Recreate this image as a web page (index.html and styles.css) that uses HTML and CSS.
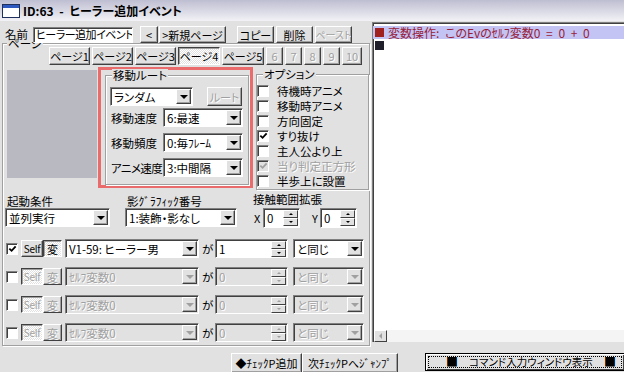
FILE: index.html
```html
<!DOCTYPE html>
<html lang="ja">
<head>
<meta charset="UTF-8">
<title>ID:63 - ヒーラー追加イベント</title>
<link rel="stylesheet" href="styles.css">
</head>
<body>
<div class="titlebar">
  <svg class="appicon" width="18" height="14" viewBox="0 0 18 14"><rect x="0.5" y="0.5" width="17" height="13" fill="#fff" stroke="#20305c"/><rect x="1" y="1" width="16" height="3" fill="#2c58c0"/></svg>
  <span class="title-text">ID:63 - ヒーラー追加イベント</span>
</div>
<div class="main">
  <div class="editor">
    <div class="namebar">
      <span class="name-label">名前</span>
      <div class="field name-field">ヒーラー追加イベント</div>
      <span class="btn nb-prev">&lt;</span>
      <span class="btn nb-new">&gt;新規ページ</span>
      <span class="btn nb-copy">コピー</span>
      <span class="btn nb-del">削除</span>
      <span class="btn nb-paste off">ペースト</span>
    </div>
    <div class="group pagebox">
      <span class="group-title">ページ</span>
      <div class="tabs">
        <span class="btn tab">ページ1</span>
        <span class="btn tab">ページ2</span>
        <span class="btn tab">ページ3</span>
        <span class="btn tab wide on">ページ4</span>
        <span class="btn tab wide">ページ5</span>
        <span class="btn tab num off">6</span>
        <span class="btn tab num off">7</span>
        <span class="btn tab num off">8</span>
        <span class="btn tab num off">9</span>
        <span class="btn tab num ten off">10</span>
      </div>
      <div class="upper">
        <div class="graphic"></div>
        <div class="route-frame">
          <div class="group route">
            <span class="group-title">移動ルート</span>
            <div class="route-top">
              <div class="combo route-type"><span class="combo-text">ランダム</span><span class="drop"></span></div>
              <span class="btn off route-btn">ルート</span>
            </div>
            <div class="route-row first"><span class="route-label">移動速度</span><div class="combo route-val"><span class="combo-text">6:最速</span><span class="drop"></span></div></div>
            <div class="route-row"><span class="route-label">移動頻度</span><div class="combo route-val"><span class="combo-text">0:毎ﾌﾚｰﾑ</span><span class="drop"></span></div></div>
            <div class="route-row"><span class="route-label tight">アニメ速度</span><div class="combo route-val"><span class="combo-text">3:中間隔</span><span class="drop"></span></div></div>
          </div>
        </div>
        <div class="group options">
          <span class="group-title">オプション</span>
          <div class="opt"><span class="check"></span>待機時アニメ</div>
          <div class="opt"><span class="check"></span>移動時アニメ</div>
          <div class="opt"><span class="check"></span>方向固定</div>
          <div class="opt"><span class="check"><svg width="10" height="10" viewBox="0 0 10 10"><path d="M1.5 4.5 L4 7 L8.5 2" fill="none" stroke="#000" stroke-width="2"/></svg></span>すり抜け</div>
          <div class="opt"><span class="check"></span>主人公より上</div>
          <div class="opt off"><span class="check dim"><svg width="10" height="10" viewBox="0 0 10 10"><path d="M1.5 4.5 L4 7 L8.5 2" fill="none" stroke="#a0a0a0" stroke-width="2"/></svg></span>当り判定正方形</div>
          <div class="opt"><span class="check"></span>半歩上に設置</div>
        </div>
      </div>
      <div class="triggers">
        <div class="trig trig-start">
          <span class="trig-label">起動条件</span>
          <div class="combo"><span class="combo-text">並列実行</span><span class="drop"></span></div>
        </div>
        <div class="trig trig-shadow">
          <span class="trig-label">影ｸﾞﾗﾌｨｯｸ番号</span>
          <div class="combo"><span class="combo-text">1:装飾・影なし</span><span class="drop"></span></div>
        </div>
        <div class="trig trig-range">
          <span class="trig-label">接触範囲拡張</span>
          <div class="xy">
            <span class="axis">X</span>
            <div class="spin xy-spin"><span class="spin-text">0</span><span class="updown"><i class="up"></i><i class="down"></i></span></div>
            <span class="axis axis-y">Y</span>
            <div class="spin xy-spin"><span class="spin-text">0</span><span class="updown"><i class="up"></i><i class="down"></i></span></div>
          </div>
        </div>
      </div>
      <div class="conds">
        <div class="cond">
          <span class="check"><svg width="10" height="10" viewBox="0 0 10 10"><path d="M1.5 4.5 L4 7 L8.5 2" fill="none" stroke="#000" stroke-width="2"/></svg></span>
          <span class="btn self">Self</span><span class="btn var on">変</span>
          <div class="combo cond-var"><span class="combo-text">V1-59: ヒーラー男</span><span class="drop"></span></div>
          <span class="ga">が</span>
          <div class="spin cond-num"><span class="spin-text">1</span><span class="updown"><i class="up"></i><i class="down"></i></span></div>
          <div class="combo cond-op"><span class="combo-text">と同じ</span><span class="drop"></span></div>
        </div>
        <div class="cond">
          <span class="check"></span>
          <span class="btn self on off">Self</span><span class="btn var off">変</span>
          <div class="combo cond-var dis"><span class="combo-text">ｾﾙﾌ変数0</span><span class="drop"></span></div>
          <span class="ga">が</span>
          <div class="spin cond-num dis"><span class="spin-text">0</span><span class="updown"><i class="up"></i><i class="down"></i></span></div>
          <div class="combo cond-op dis"><span class="combo-text">と同じ</span><span class="drop"></span></div>
        </div>
        <div class="cond">
          <span class="check"></span>
          <span class="btn self on off">Self</span><span class="btn var off">変</span>
          <div class="combo cond-var dis"><span class="combo-text">ｾﾙﾌ変数0</span><span class="drop"></span></div>
          <span class="ga">が</span>
          <div class="spin cond-num dis"><span class="spin-text">0</span><span class="updown"><i class="up"></i><i class="down"></i></span></div>
          <div class="combo cond-op dis"><span class="combo-text">と同じ</span><span class="drop"></span></div>
        </div>
        <div class="cond">
          <span class="check"></span>
          <span class="btn self on off">Self</span><span class="btn var off">変</span>
          <div class="combo cond-var dis"><span class="combo-text">ｾﾙﾌ変数0</span><span class="drop"></span></div>
          <span class="ga">が</span>
          <div class="spin cond-num dis"><span class="spin-text">0</span><span class="updown"><i class="up"></i><i class="down"></i></span></div>
          <div class="combo cond-op dis"><span class="combo-text">と同じ</span><span class="drop"></span></div>
        </div>
      </div>
    </div>
  </div>
  <div class="eventlist">
    <div class="ev-rows">
      <div class="ev sel"><span class="ev-mark"></span>変数操作: このEvのｾﾙﾌ変数0 = 0 + 0</div>
      <div class="ev"><span class="ev-mark end"></span></div>
    </div>
    <div class="hscroll"><span class="sb-btn"></span><span class="sb-track"></span></div>
  </div>
</div>
<div class="footer">
  <span class="btn foot-add">◆ﾁｪｯｸP追加</span>
  <span class="btn foot-jump">次ﾁｪｯｸPへｼﾞｬﾝﾌﾟ</span>
  <div class="cmd"><div class="cmd-inner"><span class="sq">■</span><span>コマンド入力ウィンドウ表示</span><span class="sq">■</span></div></div>
</div>
</body>
</html>
```

FILE: styles.css
```css
*{margin:0;padding:0;box-sizing:border-box;}
body{width:624px;height:372px;overflow:hidden;background:#e1e1e1;color:#000;font:11.5px/14px "Noto Sans CJK JP","Noto Sans",sans-serif;font-feature-settings:"palt";}

/* title bar */
.titlebar{height:21px;display:flex;align-items:center;padding:1px 0 0 2px;background:linear-gradient(#bebed2,#f2f2f6);}
.appicon{margin-right:3px;}
.title-text{font-weight:bold;font-size:12px;word-spacing:3px;}

.main{display:flex;height:326px;}
.editor{width:372px;flex:none;}

/* common widgets */
.btn{display:flex;align-items:center;justify-content:center;height:17px;background:#e1e1e1;border:1px solid;border-color:#fff #404040 #404040 #fff;box-shadow:inset -1px -1px #a0a0a0;white-space:nowrap;font-size:11px;flex:none;overflow:hidden;}
.btn.on{border-color:#404040 #fff #fff #404040;box-shadow:inset 1px 1px #a0a0a0;background:repeating-conic-gradient(#fff 0 25%,#e1e1e1 0 50%) 0 0/2px 2px;}
.off{color:#a0a0a0;text-shadow:1px 1px #fff;}
.field{background:#fff;border:1px solid;border-color:#808080 #fff #fff #808080;box-shadow:inset 1px 1px #404040;}

.group{border:1px solid #a0a0a0;box-shadow:inset 1px 1px #fff,1px 1px #fff;flex:none;}
.group-title{display:block;width:max-content;margin:-7px 0 0 4px;padding:0 1px;line-height:13px;background:#e1e1e1;}

.combo{display:flex;align-items:center;height:19px;padding:1px 1px 1px 2px;background:#fff;border:1px solid;border-color:#808080 #fff #fff #808080;box-shadow:inset 1px 1px #404040;flex:none;}
.combo-text{flex:1;padding-left:1px;white-space:nowrap;overflow:hidden;}
.drop{width:15px;height:15px;display:flex;align-items:center;justify-content:center;background:#e1e1e1;border:1px solid;border-color:#fff #404040 #404040 #fff;box-shadow:inset -1px -1px #a0a0a0;}
.drop::after{content:"";border-left:4px solid transparent;border-right:4px solid transparent;border-top:4px solid #000;}
.combo.dis{background:#e1e1e1;}
.combo.dis .combo-text{color:#a0a0a0;text-shadow:1px 1px #fff;}
.combo.dis .drop::after{border-top-color:#a0a0a0;}

.spin{display:flex;align-items:center;height:20px;padding:1px 1px 1px 2px;background:#fff;border:1px solid;border-color:#808080 #fff #fff #808080;box-shadow:inset 1px 1px #404040;flex:none;}
.spin-text{flex:1;padding-left:1px;}
.updown{display:flex;flex-direction:column;width:15px;height:16px;}
.updown i{flex:1;display:flex;align-items:center;justify-content:center;background:#e1e1e1;border:1px solid;border-color:#fff #404040 #404040 #fff;}
.updown .up::after{content:"";border-left:2px solid transparent;border-right:2px solid transparent;border-bottom:2px solid #000;}
.updown .down::after{content:"";border-left:2px solid transparent;border-right:2px solid transparent;border-top:2px solid #000;}
.spin.dis{background:#e1e1e1;}
.spin.dis .spin-text{color:#a0a0a0;text-shadow:1px 1px #fff;}
.spin.dis .updown i::after{border-top-color:#a0a0a0;border-bottom-color:#a0a0a0;}

.check{display:flex;align-items:center;justify-content:center;width:12px;height:12px;background:#fff;border:1px solid;border-color:#808080 #fff #fff #808080;box-shadow:inset 1px 1px #404040;flex:none;}
.check.dim{background:#e1e1e1;}
.check svg{margin:1px 0 0 1px;}

/* name row */
.namebar{position:relative;z-index:1;display:flex;align-items:flex-start;height:22px;}
.name-label{margin:6px 0 0 5px;width:28px;}
.name-field{width:100px;height:16px;margin-top:6px;padding-left:2px;line-height:13px;font-size:11px;letter-spacing:-0.5px;white-space:nowrap;overflow:hidden;}
.namebar .btn{margin-top:5px;}
.nb-prev{width:18px;margin-left:7px;}
.nb-new{width:67px;margin-left:1px;}
.nb-copy{width:37px;margin-left:11px;}
.nb-del{width:37px;margin-left:2px;}
.nb-paste{width:37px;margin-left:2px;font-size:10px;}

/* page frame */
.pagebox{width:368px;height:303px;margin-left:2px;}
.tabs{display:flex;gap:2px;margin:-3px 0 0 46px;}
.tab{width:41px;height:18px;}
.tab.wide{width:42px;}
.tab.num{width:17px;}
.tab.ten{width:20px;}

.upper{display:flex;align-items:flex-start;height:122px;margin-top:2px;}
.graphic{width:90px;height:108px;margin:3px 0 0 4px;background:#b9b9c1;}
.route-frame{width:155px;height:121px;margin-left:1px;border:3px solid #e96b6b;}
.route{width:144px;height:110px;margin:5px 0 0 4px;}
.route .group-title{margin-left:6px;}
.route-top{display:flex;align-items:center;margin:5px 0 0 4px;}
.route-type{width:83px;}
.route-btn{width:35px;height:19px;margin-left:14px;}
.route-row{display:flex;align-items:center;margin:6px 0 0 4px;}
.route-row.first{margin-top:2px;}
.route-label{width:53px;padding-left:1px;white-space:nowrap;}
.route-label.tight{letter-spacing:-0.6px;}
.route-val{width:80px;}

.options{width:113px;height:116px;margin:7px 0 0 3px;}
.options .group-title{margin-left:6px;}
.opt{display:flex;align-items:center;height:15px;white-space:nowrap;}
.opt .check{margin:0 8px 0 0;}
.options .group-title + .opt{margin-top:2px;}

/* start condition row */
.triggers{display:flex;height:35px;margin-top:4px;}
.trig{display:flex;flex-direction:column;}
.trig-label{height:15px;line-height:16px;padding-left:2px;white-space:nowrap;}
.trig-start{width:105px;margin-left:2px;}
.trig-shadow{width:112px;margin-left:15px;}
.trig-range{margin-left:16px;}
.trig-range .trig-label{line-height:12px;padding-left:0;}
.xy{display:flex;align-items:center;}
.axis{width:10px;padding-left:1px;font-size:11px;}
.axis-y{margin-left:11px;width:9px;}
.xy-spin{width:37px;}

/* page conditions */
.conds{display:flex;flex-direction:column;gap:9px;margin-top:11px;}
.cond{display:flex;align-items:center;height:19px;}
.cond .check{margin-left:3px;}
.self{width:22px;margin-left:3px;font-size:10px;letter-spacing:-0.3px;}
.var{width:19px;}
.cond-var{width:134px;margin-left:3px;}
.ga{width:11px;margin-left:3px;}
.cond-num{width:73px;margin-left:2px;height:19px;}
.cond-op{width:71px;margin-left:5px;}

/* event list */
.eventlist{flex:1;display:flex;flex-direction:column;margin:1px 0 5px;background:#fff;border-left:1px solid #808080;border-top:1px solid #808080;box-shadow:inset 1px 1px #404040;}
.ev-rows{flex:1;padding-top:3px;}
.ev{display:flex;align-items:center;height:13px;padding-left:2px;color:#981c38;font-size:12px;white-space:pre;word-spacing:3px;}
.ev.sel{background:#c4c4f4;}
.ev-mark{width:9px;height:9px;margin-right:4px;background:#a02020;}
.ev-mark.end{background:#20202c;}
.hscroll{display:flex;height:12px;margin-left:1px;}
.sb-btn{width:13px;display:flex;align-items:center;justify-content:center;background:#e1e1e1;border:1px solid;border-color:#fff #404040 #404040 #fff;}
.sb-btn::after{content:"";border-top:3px solid transparent;border-bottom:3px solid transparent;border-right:3px solid #a0a0a0;}
.sb-track{flex:1;background:#f4f4f4;}

/* bottom buttons */
.footer{display:flex;align-items:flex-start;height:25px;padding-top:6px;}
.foot-add{width:71px;height:20px;margin-left:231px;}
.foot-jump{width:96px;height:20px;}
.cmd{display:flex;width:200px;height:18px;margin-left:27px;border:1px solid #000;box-shadow:inset 1px 1px #fff,inset -1px -1px #404040;flex:none;font-size:10.5px;}
.cmd-inner{flex:1;display:flex;align-items:center;justify-content:space-between;margin:2px;padding:0 5px 0 17px;border:1px dotted #000;line-height:12px;}
.sq{font-size:12px;}
```
